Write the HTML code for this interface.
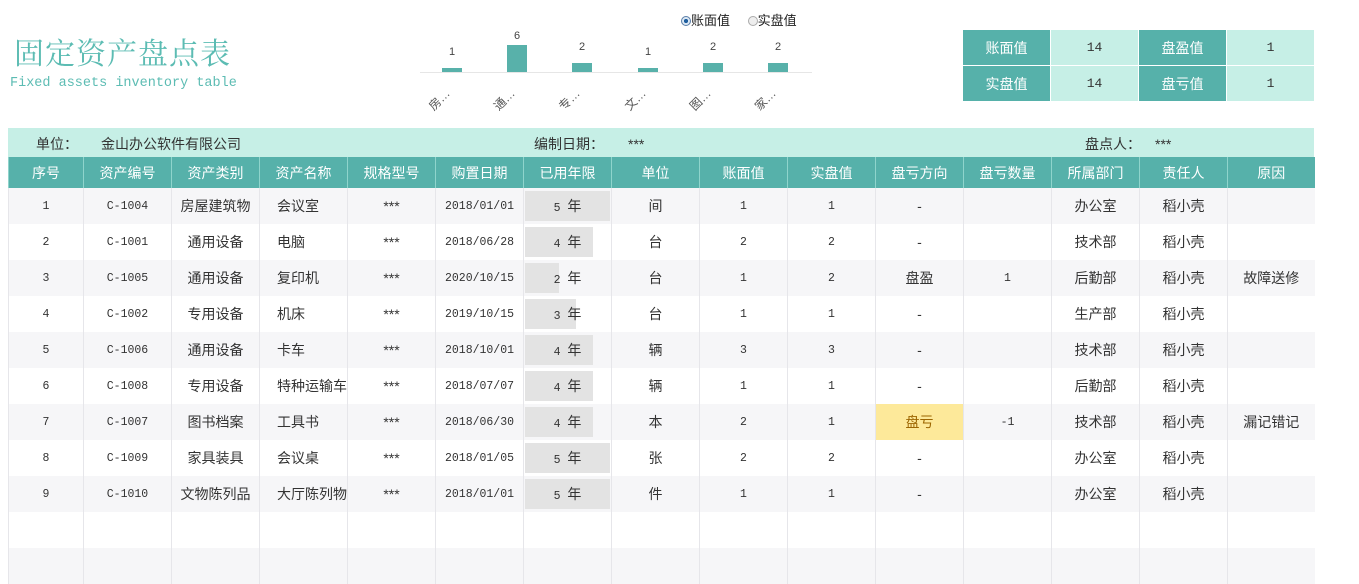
<!DOCTYPE html>
<html><head><meta charset="utf-8"><style>
*{margin:0;padding:0;box-sizing:border-box}
body{width:1359px;height:563px;background:#fff;position:relative;overflow:hidden;font-family:"Liberation Sans","Noto Sans CJK SC",sans-serif;color:#333}
.a{position:absolute}
.title{left:14px;top:29px;font-size:30px;color:#5cbcb3;font-family:"Liberation Serif","Noto Serif CJK SC",serif;letter-spacing:1px}
.sub{left:10px;top:76px;font-size:13.5px;color:#5cbcb3;font-family:"Liberation Mono",monospace}
.bar{position:absolute;background:#58b1aa;width:20px}
.bl{position:absolute;font-size:11px;color:#444;width:30px;text-align:center}
.xl{position:absolute;font-size:12px;color:#555;transform:rotate(-45deg);transform-origin:center}
table{border-collapse:collapse;position:absolute;table-layout:fixed}
.sum td{height:36px;text-align:center;font-size:14px;border:1px solid #fff}
.sum .h{background:#56b1aa;color:#fff}
.sum .v{background:#c6efe6;color:#333;font-family:"Liberation Mono",monospace;font-size:13px}
.main{left:8px;top:157px}
.main td{height:36px;text-align:center;font-size:14px;border-left:1px solid #e6e6ea;color:#333;position:relative;white-space:nowrap;padding:0;overflow:visible}
.main th{height:31px;background:#56b1aa;color:#fff;font-weight:normal;font-size:14px;border-left:1px solid #8fd4cc;white-space:nowrap}
.main tr.g td{background:#f6f6f8}
.main td.n{text-align:left;padding-left:17px}
.main .m{font-family:"Liberation Mono",monospace;font-size:11.5px}
.yr{position:absolute;left:1px;top:3px;height:30px;background:#e3e3e3}
.yt{position:relative}
</style></head><body>
<div class="a title">固定资产盘点表</div>
<div class="a sub">Fixed assets inventory table</div>

<div class="a" style="left:681px;top:10px;font-size:13px;color:#222">
<span style="display:inline-block;width:10px;height:10px;border-radius:50%;border:1px solid #5a7ea8;background:radial-gradient(#1f5f9f 35%,#dbe7f3 40%);vertical-align:-1px"></span>账面值
<span style="display:inline-block;width:10px;height:10px;border-radius:50%;border:1px solid #aaa;background:#eee;vertical-align:-1px;margin-left:14px"></span>实盘值</div>
<div class="a" style="left:420px;top:72px;width:392px;height:1px;background:#e6e6e6"></div>
<div class="bar" style="left:442px;top:68px;height:4px"></div>
<div class="bar" style="left:507px;top:45px;height:27px"></div>
<div class="bar" style="left:572px;top:63px;height:9px"></div>
<div class="bar" style="left:638px;top:68px;height:4px"></div>
<div class="bar" style="left:703px;top:63px;height:9px"></div>
<div class="bar" style="left:768px;top:63px;height:9px"></div>
<div class="bl" style="left:437px;top:46px">1</div>
<div class="bl" style="left:502px;top:30px">6</div>
<div class="bl" style="left:567px;top:41px">2</div>
<div class="bl" style="left:633px;top:46px">1</div>
<div class="bl" style="left:698px;top:41px">2</div>
<div class="bl" style="left:763px;top:41px">2</div>
<div class="xl" style="left:427px;top:91px">房…</div>
<div class="xl" style="left:492px;top:91px">通…</div>
<div class="xl" style="left:557px;top:91px">专…</div>
<div class="xl" style="left:623px;top:91px">文…</div>
<div class="xl" style="left:688px;top:91px">图…</div>
<div class="xl" style="left:753px;top:91px">家…</div>

<table class="sum" style="left:962px;top:29px;width:352px">
<colgroup><col style="width:88px"><col style="width:88px"><col style="width:88px"><col style="width:88px"></colgroup>
<tr><td class="h">账面值</td><td class="v">14</td><td class="h">盘盈值</td><td class="v">1</td></tr>
<tr><td class="h">实盘值</td><td class="v">14</td><td class="h">盘亏值</td><td class="v">1</td></tr>
</table>

<div class="a" style="left:8px;top:128px;width:1306px;height:29px;background:#c6efe6;font-size:14px;color:#333">
<span class="a" style="left:28px;top:6px">单位：</span>
<span class="a" style="left:93px;top:6px">金山办公软件有限公司</span>
<span class="a" style="left:526px;top:6px">编制日期：</span>
<span class="a" style="left:620px;top:8px" >***</span>
<span class="a" style="left:1077px;top:6px">盘点人：</span>
<span class="a" style="left:1147px;top:8px">***</span>
</div>

<table class="main" style="width:1306px">
<colgroup><col style="width:75px"><col style="width:88px"><col style="width:88px"><col style="width:88px"><col style="width:88px"><col style="width:88px"><col style="width:88px"><col style="width:88px"><col style="width:88px"><col style="width:88px"><col style="width:88px"><col style="width:88px"><col style="width:88px"><col style="width:88px"><col style="width:87px"></colgroup>
<tr><th>序号</th><th>资产编号</th><th>资产类别</th><th>资产名称</th><th>规格型号</th><th>购置日期</th><th>已用年限</th><th>单位</th><th>账面值</th><th>实盘值</th><th>盘亏方向</th><th>盘亏数量</th><th>所属部门</th><th>责任人</th><th>原因</th></tr>
<tr class="g"><td class="m">1</td><td class="m">C-1004</td><td>房屋建筑物</td><td class="n">会议室</td><td>***</td><td class="m">2018/01/01</td><td><div class="yr" style="width:85px"></div><span class="yt m">5 </span><span class="yt">年</span></td><td>间</td><td class="m">1</td><td class="m">1</td><td>-</td><td></td><td>办公室</td><td>稻小壳</td><td></td></tr>
<tr><td class="m">2</td><td class="m">C-1001</td><td>通用设备</td><td class="n">电脑</td><td>***</td><td class="m">2018/06/28</td><td><div class="yr" style="width:68px"></div><span class="yt m">4 </span><span class="yt">年</span></td><td>台</td><td class="m">2</td><td class="m">2</td><td>-</td><td></td><td>技术部</td><td>稻小壳</td><td></td></tr>
<tr class="g"><td class="m">3</td><td class="m">C-1005</td><td>通用设备</td><td class="n">复印机</td><td>***</td><td class="m">2020/10/15</td><td><div class="yr" style="width:34px"></div><span class="yt m">2 </span><span class="yt">年</span></td><td>台</td><td class="m">1</td><td class="m">2</td><td>盘盈</td><td class="m">1</td><td>后勤部</td><td>稻小壳</td><td>故障送修</td></tr>
<tr><td class="m">4</td><td class="m">C-1002</td><td>专用设备</td><td class="n">机床</td><td>***</td><td class="m">2019/10/15</td><td><div class="yr" style="width:51px"></div><span class="yt m">3 </span><span class="yt">年</span></td><td>台</td><td class="m">1</td><td class="m">1</td><td>-</td><td></td><td>生产部</td><td>稻小壳</td><td></td></tr>
<tr class="g"><td class="m">5</td><td class="m">C-1006</td><td>通用设备</td><td class="n">卡车</td><td>***</td><td class="m">2018/10/01</td><td><div class="yr" style="width:68px"></div><span class="yt m">4 </span><span class="yt">年</span></td><td>辆</td><td class="m">3</td><td class="m">3</td><td>-</td><td></td><td>技术部</td><td>稻小壳</td><td></td></tr>
<tr><td class="m">6</td><td class="m">C-1008</td><td>专用设备</td><td class="n">特种运输车</td><td>***</td><td class="m">2018/07/07</td><td><div class="yr" style="width:68px"></div><span class="yt m">4 </span><span class="yt">年</span></td><td>辆</td><td class="m">1</td><td class="m">1</td><td>-</td><td></td><td>后勤部</td><td>稻小壳</td><td></td></tr>
<tr class="g"><td class="m">7</td><td class="m">C-1007</td><td>图书档案</td><td class="n">工具书</td><td>***</td><td class="m">2018/06/30</td><td><div class="yr" style="width:68px"></div><span class="yt m">4 </span><span class="yt">年</span></td><td>本</td><td class="m">2</td><td class="m">1</td><td style="background:#fde99a;color:#9c6500">盘亏</td><td class="m">-1</td><td>技术部</td><td>稻小壳</td><td>漏记错记</td></tr>
<tr><td class="m">8</td><td class="m">C-1009</td><td>家具装具</td><td class="n">会议桌</td><td>***</td><td class="m">2018/01/05</td><td><div class="yr" style="width:85px"></div><span class="yt m">5 </span><span class="yt">年</span></td><td>张</td><td class="m">2</td><td class="m">2</td><td>-</td><td></td><td>办公室</td><td>稻小壳</td><td></td></tr>
<tr class="g"><td class="m">9</td><td class="m">C-1010</td><td>文物陈列品</td><td class="n">大厅陈列物</td><td>***</td><td class="m">2018/01/01</td><td><div class="yr" style="width:85px"></div><span class="yt m">5 </span><span class="yt">年</span></td><td>件</td><td class="m">1</td><td class="m">1</td><td>-</td><td></td><td>办公室</td><td>稻小壳</td><td></td></tr>
<tr><td></td><td></td><td></td><td></td><td></td><td></td><td></td><td></td><td></td><td></td><td></td><td></td><td></td><td></td><td></td></tr>
<tr class="g"><td></td><td></td><td></td><td></td><td></td><td></td><td></td><td></td><td></td><td></td><td></td><td></td><td></td><td></td><td></td></tr>
</table>
</body></html>
